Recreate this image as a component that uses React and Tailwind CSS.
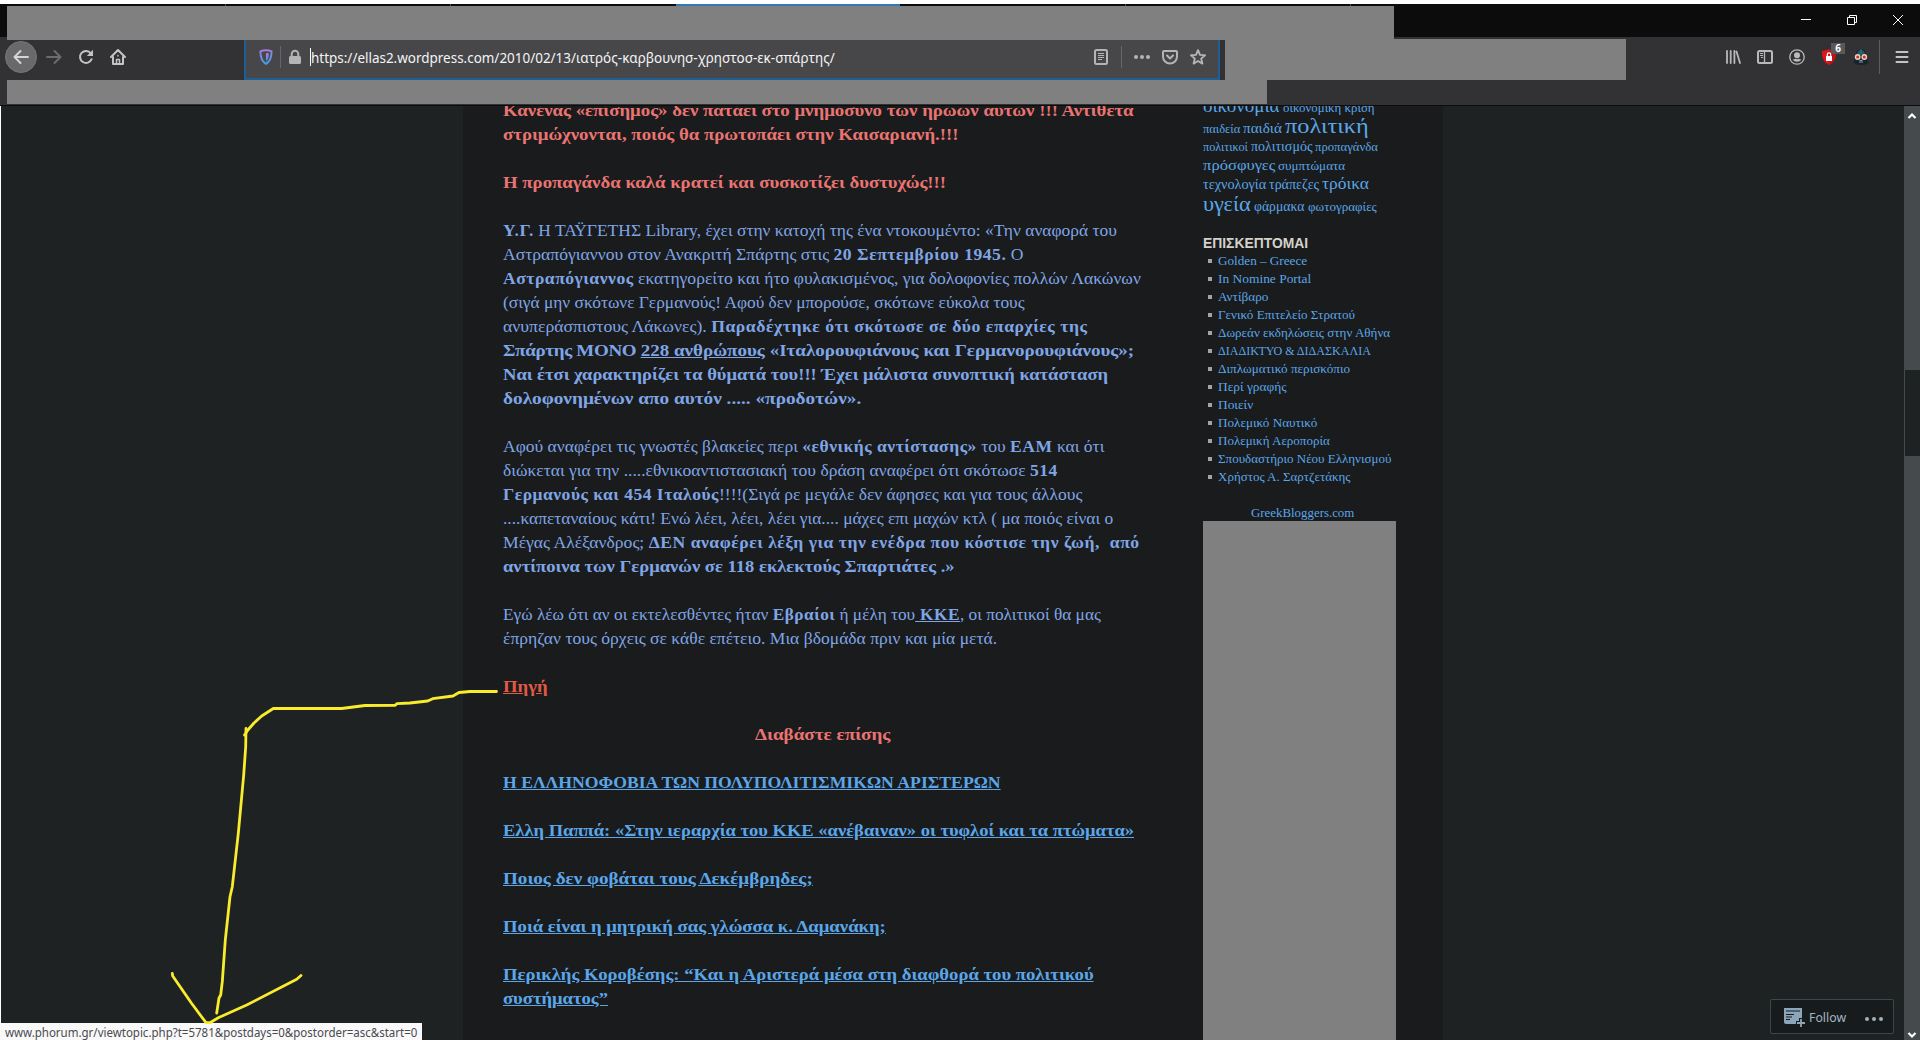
import { useLayoutEffect, useRef, useState } from "react";

// Stretches a single line of text to an exact width
function Fit({ w, className = "", children }) {
  const ref = useRef(null);
  const [scale, setScale] = useState(1);

  useLayoutEffect(() => {
    setScale(w / ref.current.offsetWidth);
  }, [w]);

  return (
    <span className="block shrink-0 whitespace-pre" style={{ width: w }}>
      <span
        ref={ref}
        className={"inline-block origin-left " + className}
        style={{ transform: `scaleX(${scale})` }}
      >
        {children}
      </span>
    </span>
  );
}

const relatedLinks = [
  [{ w: 498, text: "Η ΕΛΛΗΝΟΦΟΒΙΑ ΤΩΝ ΠΟΛΥΠΟΛΙΤΙΣΜΙΚΩΝ ΑΡΙΣΤΕΡΩΝ" }],
  [{ w: 631, text: "Ελλη Παππά: «Στην ιεραρχία του ΚΚΕ «ανέβαιναν» οι τυφλοί και τα πτώματα»" }],
  [{ w: 310, text: "Ποιος δεν φοβάται τους Δεκέμβρηδες;" }],
  [{ w: 383, text: "Ποιά είναι η μητρική σας γλώσσα κ. Δαμανάκη;" }],
  [
    { w: 591, text: "Περικλής Κοροβέσης: “Και η Αριστερά μέσα στη διαφθορά του πολιτικού" },
    { w: 105, text: "συστήματος”" },
  ],
];

const tagRows = [
  {
    row: "h-5",
    tags: [
      { w: 77, size: "text-[18px]", text: "οικονομία" },
      { w: 92, size: "text-[13px]", text: "οικονομική κρίση" },
    ],
  },
  {
    row: "h-5",
    tags: [
      { w: 37, size: "text-[12.5px]", text: "παιδεία" },
      { w: 39, size: "text-[14px]", text: "παιδιά" },
      { w: 84, size: "text-[22px]", text: "πολιτική" },
    ],
  },
  {
    row: "h-[19px]",
    tags: [
      { w: 45, size: "text-[12.5px]", text: "πολιτικοί" },
      { w: 61, size: "text-[14px]", text: "πολιτισμός" },
      { w: 63, size: "text-[12.5px]", text: "προπαγάνδα" },
    ],
  },
  {
    row: "h-[19px]",
    tags: [
      { w: 72, size: "text-[15px]", text: "πρόσφυγες" },
      { w: 67, size: "text-[13.5px]", text: "συμπτώματα" },
    ],
  },
  {
    row: "h-5",
    tags: [
      { w: 63, size: "text-[14px]", text: "τεχνολογία" },
      { w: 50, size: "text-[14px]", text: "τράπεζες" },
      { w: 47, size: "text-[16px]", text: "τρόικα" },
    ],
  },
  {
    row: "h-[21px]",
    tags: [
      { w: 48, size: "text-[21px]", text: "υγεία" },
      { w: 51, size: "text-[14px]", text: "φάρμακα" },
      { w: 69, size: "text-[12.5px]", text: "φωτογραφίες" },
    ],
  },
];

const blogroll = [
  { w: 89, text: "Golden – Greece" },
  { w: 93, text: "In Nomine Portal" },
  { w: 50, text: "Αντίβαρο" },
  { w: 137, text: "Γενικό Επιτελείο Στρατού" },
  { w: 172, text: "Δωρεάν εκδηλώσεις στην Αθήνα" },
  { w: 153, text: "ΔΙΑΔΙΚΤΥΟ & ΔΙΔΑΣΚΑΛΙΑ" },
  { w: 132, text: "Διπλωματικό περισκόπιο" },
  { w: 69, text: "Περί γραφής" },
  { w: 35, text: "Ποιείν" },
  { w: 99, text: "Πολεμικό Ναυτικό" },
  { w: 112, text: "Πολεμική Αεροπορία" },
  { w: 173, text: "Σπουδαστήριο Νέου Ελληνισμού" },
  { w: 132, text: "Χρήστος Α. Σαρτζετάκης" },
];

function TabStrip() {
  return (
    <div>
      <div className="h-1 bg-white" />
      {/* tab tops */}
      <div className="flex h-0.5 bg-[#0c0c0d] pl-[225px]">
        <div className="w-px bg-[#4a4a4c]" />
        <div className="ml-56 w-px bg-[#4a4a4c]" />
        <div className="ml-[225px] w-56 bg-[#3079bd]" />
        <div className="ml-[225px] w-px bg-[#4a4a4c]" />
        <div className="ml-56 w-px bg-[#4a4a4c]" />
      </div>
      <div className="flex h-[31px] bg-[#0c0c0d] pl-[7px]">
        <div className="w-[1387px] bg-[#808080]" />
        <div className="flex flex-1 items-start justify-end gap-[34px] pt-2 pr-4">
          <svg width="12" height="12" viewBox="0 0 12 12" stroke="#fff" fill="none">
            <path d="M1 5.5h10" />
          </svg>
          <svg width="12" height="12" viewBox="0 0 12 12" stroke="#fff" fill="none">
            <path d="M1.5 3.5h7v7h-7zM3.5 3.5v-2h7v7h-2" />
          </svg>
          <svg width="12" height="12" viewBox="0 0 12 12" stroke="#fff" fill="none">
            <path d="M1 1l10 10M11 1L1 11" />
          </svg>
        </div>
      </div>
    </div>
  );
}

function NavButtons() {
  return (
    <div className="flex w-[244px] items-center pb-[7px] pl-[5px]">
      <div className="flex size-8 items-center justify-center rounded-full border border-[#76767a] bg-[#69696c]">
        <svg width="16" height="16" viewBox="0 0 16 16" fill="none" stroke="#d4d4d5" strokeWidth="2" strokeLinecap="round" strokeLinejoin="round">
          <path d="M15 8H1.500M7.500 2l-6 6 6 6" />
        </svg>
      </div>
      <svg className="ml-[9px]" width="16" height="16" viewBox="0 0 16 16" fill="none" stroke="#6c6c6e" strokeWidth="2" strokeLinecap="round" strokeLinejoin="round">
        <path d="M1 8h13.500M8.500 2l6 6-6 6" />
      </svg>
      <svg className="ml-4" width="16" height="16" viewBox="0 0 16 16" fill="none" stroke="#c4c4c5" strokeWidth="2" strokeLinecap="round">
        <path d="M13.600 10.200A6 6 0 1 1 12.800 4.300" />
        <path d="M15 .8v6.200H8.800z" fill="#c4c4c5" stroke="none" />
      </svg>
      <svg className="ml-4" width="16" height="16" viewBox="0 0 16 16" fill="none" stroke="#c4c4c5" strokeWidth="2" strokeLinecap="round" strokeLinejoin="round">
        <path d="M1 8l7-7 7 7M3 8v7h10V8" />
        <path d="M6.500 15v-4.500h3V15" strokeWidth="1.500" />
        <path d="M8 6.500v.5" strokeWidth="1.500" />
      </svg>
    </div>
  );
}

function UrlBar() {
  return (
    <div className="flex w-[976px] items-center border-x-2 border-b-2 border-[#1d5f95] bg-[#474749] pr-3 pb-[5px] pl-[13px]">
      <svg width="14" height="16" viewBox="0 0 14 16" fill="none">
        <defs>
          <linearGradient id="shield" x1="0" y1="0" x2="0" y2="1">
            <stop offset="0" stopColor="#a77ae0" />
            <stop offset="1" stopColor="#3fa0e6" />
          </linearGradient>
        </defs>
        <path d="M7 1.200c2 0 4 .4 5.600 1.100 0 5.500-.8 9.900-5.600 12.500C2.200 12.200 1.400 7.800 1.400 2.300 3 1.600 5 1.200 7 1.200z" stroke="url(#shield)" strokeWidth="1.900" />
        <path d="M7 4c1 0 2 .1 2.800.4 0 3.500-.6 5.800-2.800 7.600z" fill="url(#shield)" />
      </svg>
      <div className="ml-[7px] h-[22px] w-px bg-[#67676a]" />
      <svg className="ml-[7px]" width="14" height="16" viewBox="0 0 14 16" fill="none">
        <rect x="1" y="7" width="12" height="8" rx="1.500" fill="#b4b4b6" />
        <path d="M3.700 8V5a3.300 3.300 0 0 1 6.600 0v3" stroke="#b4b4b6" strokeWidth="2" />
      </svg>
      <div className="ml-2 h-[18px] w-px bg-white" />
      <Fit w={524} className="font-['Noto_Sans',sans-serif] text-[14px] leading-5 text-[#f4f4f5]">
        https://ellas2.wordpress.com/2010/02/13/ιατρός-καρβουνησ-χρηστοσ-εκ-σπάρτης/
      </Fit>
      <div className="flex flex-1 items-center justify-end">
        <svg width="14" height="16" viewBox="0 0 14 16" fill="none" stroke="#b4b4b6">
          <rect x="1" y="1" width="12" height="14" rx="1.500" strokeWidth="2" />
          <path d="M4 4.500h6M4 6.500h6M4 8.500h6M4 10.500h4" />
        </svg>
        <div className="ml-[13px] h-[22px] w-px bg-[#67676a]" />
        <svg className="ml-3" width="16" height="16" viewBox="0 0 16 16" fill="#b4b4b6">
          <circle cx="2" cy="8" r="2" />
          <circle cx="8" cy="8" r="2" />
          <circle cx="14" cy="8" r="2" />
        </svg>
        <svg className="ml-3" width="16" height="16" viewBox="0 0 16 16" fill="none" stroke="#b4b4b6" strokeWidth="2" strokeLinecap="round" strokeLinejoin="round">
          <path d="M2 2h12a1 1 0 0 1 1 1v4.500a7 7 0 0 1-14 0V3a1 1 0 0 1 1-1z" />
          <path d="M5 6.500l3 3 3-3" />
        </svg>
        <svg className="ml-3" width="16" height="16" viewBox="0 0 16 16" fill="none" stroke="#b4b4b6" strokeWidth="1.900" strokeLinejoin="round">
          <path d="M8 1.200l2 4.700 5 .4-3.800 3.300 1.200 5L8 12l-4.400 2.600 1.200-5L1 6.300l5-.4z" />
        </svg>
      </div>
    </div>
  );
}

function ToolbarIcons() {
  return (
    <div className="flex flex-1 items-center justify-end pr-[10px] pb-[7px]">
      <svg width="16" height="16" viewBox="0 0 16 16" fill="none" stroke="#b9b9ba" strokeWidth="2" strokeLinecap="round">
        <path d="M2 2v12M5.700 2v12M9.400 2v12M11.500 2.500L15 14" strokeWidth="1.800" />
      </svg>
      <svg className="ml-4" width="16" height="16" viewBox="0 0 16 16" fill="none" stroke="#b9b9ba">
        <rect x="1" y="2" width="14" height="12" rx="1.500" strokeWidth="2" />
        <path d="M7.500 2v12" strokeWidth="1.300" />
        <path d="M3 4.500h3M3 6.500h3M4 8.500h2" />
      </svg>
      <svg className="ml-4" width="16" height="16" viewBox="0 0 16 16" fill="none">
        <circle cx="8" cy="8" r="7.200" stroke="#b9b9ba" strokeWidth="1.300" />
        <circle cx="8" cy="6.200" r="3" fill="#b9b9ba" />
        <path d="M3.500 10.500c1.200.2 2.200-.3 2.800-.8 1 .6 2.400.6 3.400 0 .6.500 1.600 1 2.800.8a5.500 5.500 0 0 1-9 0z" fill="#b9b9ba" />
      </svg>
      <div className="relative ml-4">
        <svg width="16" height="18" viewBox="0 0 16 18">
          <path d="M8 1c2 1.200 4.500 1.800 7 1.800 0 6.500-1 11.200-7 14.200C2 14 1 9.300 1 2.800 3.500 2.800 6 2.200 8 1z" fill="#e0151b" />
          <path d="M8 1c2 1.200 4.500 1.800 7 1.800 0 6.500-1 11.200-7 14.200z" fill="#c90f14" />
          <rect x="5" y="8" width="6" height="5" fill="#fff" />
          <path d="M6.300 8V6.500a1.700 1.700 0 0 1 3.400 0V8" stroke="#fff" strokeWidth="1.200" fill="none" />
        </svg>
        <span className="absolute -top-[5px] left-[10px] flex h-[11px] w-[14px] items-center justify-center bg-[#58595b] font-['Noto_Sans',sans-serif] text-[10px] leading-none font-bold text-white">
          6
        </span>
      </div>
      <svg className="ml-4" width="16" height="16" viewBox="0 0 16 16">
        <path d="M8 0C4.500 0 3 2.500 3 5.500L.5 14 5 16h6l4.500-2L13 5.500C13 2.500 11.500 0 8 0z" fill="#14252d" />
        <path d="M8 1C5.500 1 4 3 4 5.500h8C12 3 10.500 1 8 1z" fill="#245562" />
        <path d="M7.300 0h1.400v6H7.300z" fill="#2f6b7a" />
        <circle cx="4.700" cy="8" r="2.200" fill="#c4352a" stroke="#f0cfc2" strokeWidth="1.400" />
        <circle cx="11.300" cy="8" r="2.200" fill="#c4352a" stroke="#f0cfc2" strokeWidth="1.400" />
        <path d="M6 13h4M6.500 11.500h3" stroke="#8a9499" />
      </svg>
      <div className="ml-[10px] h-[34px] w-px bg-[#5c5c5e]" />
      <svg className="ml-[14px]" width="16" height="16" viewBox="0 0 16 16" stroke="#c4c4c5" strokeWidth="2" strokeLinecap="round">
        <path d="M2.500 3h11M2.500 8h11M2.500 13h11" />
      </svg>
    </div>
  );
}

function Toolbar() {
  return (
    <div className="h-[69px] border-b border-[#0c0c0d] bg-[#323234]">
      <div className="h-0.5 pl-[7px]">
        <div className="h-full w-[1387px] bg-[#808080]" />
      </div>
      <div className="h-px pl-[7px]">
        <div className="h-full w-[1619px] bg-[#808080]" />
      </div>
      <div className="flex h-10">
        <NavButtons />
        <UrlBar />
        <div className="ml-[5px] w-[401px] bg-[#808080]" />
        <ToolbarIcons />
      </div>
      {/* bookmarks */}
      <div className="h-6 pl-[7px]">
        <div className="h-full w-[1260px] bg-[#808080]" />
      </div>
    </div>
  );
}

function Article() {
  return (
    <article className="-mt-[7px] w-[640px] space-y-6 font-['Liberation_Serif',serif] text-[17px] leading-6 text-[#80a5e5] [&_b]:tracking-[0.5px]">
      <div className="font-bold text-[#ea7472]">
        <Fit w={631}>Κανένας «επίσημος» δεν πατάει στο μνημόσυνο των ηρώων αυτών !!! Αντίθετα</Fit>
        <Fit w={456}>στριμώχνονται, ποιός θα πρωτοπάει στην Καισαριανή.!!!</Fit>
      </div>
      <div className="font-bold text-[#ea7472]">
        <Fit w={443}>Η προπαγάνδα καλά κρατεί και συσκοτίζει δυστυχώς!!!</Fit>
      </div>
      <div>
        <Fit w={614}>
          <b>Υ.Γ.</b> Η ΤΑΫΓΕΤΗΣ Library, έχει στην κατοχή της ένα ντοκουμέντο: «Την αναφορά του
        </Fit>
        <Fit w={520}>
          Αστραπόγιαννου στον Ανακριτή Σπάρτης στις <b>20 Σεπτεμβρίου 1945.</b> Ο
        </Fit>
        <Fit w={638}>
          <b>Αστραπόγιαννος</b> εκατηγορείτο και ήτο φυλακισμένος, για δολοφονίες πολλών Λακώνων
        </Fit>
        <Fit w={522}>(σιγά μην σκότωνε Γερμανούς! Αφού δεν μπορούσε, σκότωνε εύκολα τους</Fit>
        <Fit w={585}>
          ανυπεράσπιστους Λάκωνες). <b>Παραδέχτηκε ότι σκότωσε σε δύο επαρχίες της</b>
        </Fit>
        <Fit w={631} className="font-bold">
          <span className="-tracking-[0.3px]">Σπάρτης ΜΟΝΟ </span>
          <span className="underline">228 ανθρώπους</span> «Ιταλορουφιάνους και Γερμανορουφιάνους»;
        </Fit>
        <Fit w={605} className="font-bold">
          Ναι έτσι χαρακτηρίζει τα θύματά του!!! Έχει μάλιστα συνοπτική κατάσταση
        </Fit>
        <Fit w={358} className="font-bold">δολοφονημένων απο αυτόν ..... «προδοτών».</Fit>
      </div>
      <div>
        <Fit w={601}>
          Αφού αναφέρει τις γνωστές βλακείες περι <b>«εθνικής αντίστασης»</b> του <b>ΕΑΜ</b> και ότι
        </Fit>
        <Fit w={555}>
          διώκεται για την .....εθνικοαντιστασιακή του δράση αναφέρει ότι σκότωσε <b>514</b>
        </Fit>
        <Fit w={579}>
          <b>Γερμανούς και 454 Ιταλούς</b>!!!!(Σιγά ρε μεγάλε δεν άφησες και για τους άλλους
        </Fit>
        <Fit w={610}>....καπεταναίους κάτι! Ενώ λέει, λέει, λέει για.... μάχες επι μαχών κτλ ( μα ποιός είναι ο</Fit>
        <Fit w={637}>
          Μέγας Αλέξανδρος; <b>ΔΕΝ αναφέρει λέξη για την ενέδρα που κόστισε την ζωή,&nbsp; από</b>
        </Fit>
        <Fit w={452} className="font-bold">αντίποινα των Γερμανών σε 118 εκλεκτούς Σπαρτιάτες .»</Fit>
      </div>
      <div>
        <Fit w={598}>
          Εγώ λέω ότι αν οι εκτελεσθέντες ήταν <b>Εβραίοι</b> ή μέλη του<b className="underline"> ΚΚΕ</b>, οι πολιτικοί θα μας
        </Fit>
        <Fit w={494}>έπρηζαν τους όρχεις σε κάθε επέτειο. Μια βδομάδα πριν και μία μετά.</Fit>
      </div>
      <a className="block font-bold text-[#e25a45]">
        <Fit w={44} className="underline">Πηγή</Fit>
      </a>
      <div className="flex justify-center pr-0.5 font-bold text-[#ea7472]">
        <Fit w={135}>Διαβάστε επίσης</Fit>
      </div>
      {relatedLinks.map((lines, i) => (
        <a key={i} className="block font-bold text-[#5ba6e8]">
          {lines.map((line) => (
            <Fit key={line.text} w={line.w} className="underline">
              {line.text}
            </Fit>
          ))}
        </a>
      ))}
    </article>
  );
}

function Sidebar() {
  return (
    <aside className="ml-[60px] flex w-[193px] flex-col font-['Liberation_Serif',serif] text-[#5ba6e8]">
      <div className="-mt-[10px]">
        {tagRows.map((r, i) => (
          <div key={i} className={"flex items-baseline gap-[3px] leading-5 " + r.row}>
            {r.tags.map((t) => (
              <Fit key={t.text} w={t.w} className={t.size}>
                {t.text}
              </Fit>
            ))}
          </div>
        ))}
      </div>
      <h3 className="mt-[19px] font-['Liberation_Sans',sans-serif] text-[14px] leading-[18px] font-bold text-[#d5d1cb]">
        <Fit w={105}>ΕΠΙΣΚΕΠΤΟΜΑΙ</Fit>
      </h3>
      <ul className="text-[13px] leading-[18px]">
        {blogroll.map((link) => (
          <li key={link.text} className="flex h-[18px] items-center pl-[5px]">
            <span className="mr-[6px] size-1 bg-[#a8a49d]" />
            <Fit w={link.w}>{link.text}</Fit>
          </li>
        ))}
      </ul>
      <div className="mt-[18px] flex h-[17px] justify-center pl-1.5 text-[13px] leading-[18px]">
        <Fit w={103}>GreekBloggers.com</Fit>
      </div>
      <div className="flex-1 bg-[#808080]" />
    </aside>
  );
}

function ScrollBar() {
  return (
    <div className="flex w-4 flex-col items-center bg-[#454a4d]">
      <svg className="mt-1.5" width="10" height="8" viewBox="0 0 10 8" fill="none" stroke="#fff" strokeWidth="2.200">
        <path d="M1.500 6L5 2.500 8.500 6" />
      </svg>
      <div className="mt-[250px] ml-px h-[86px] w-[15px] bg-[#1f2223]" />
      <svg className="mt-auto mb-px" width="10" height="8" viewBox="0 0 10 8" fill="none" stroke="#fff" strokeWidth="2.200">
        <path d="M1.500 2L5 5.500 8.500 2" />
      </svg>
    </div>
  );
}

function FollowBar() {
  return (
    <div className="absolute top-[999px] left-[1770px] flex h-[35px] w-[124px] items-center rounded-[2px] border border-[#374850] bg-[#181b1c] pl-[13px] font-['Noto_Sans',sans-serif] text-[13px] leading-5 text-[#a0b5c4]">
      <svg className="mt-0.5" width="22" height="20" viewBox="0 0 22 20">
        <path d="M0 0h18v10h-3v3h-3v3H2a2 2 0 0 1-2-2z" fill="#8ba6bb" />
        <path d="M2 3h14M2 6.500h8M2 9h6M2 11.500h4" stroke="#181b1c" strokeWidth="1.200" />
        <path d="M17 11v8M13 15h8" stroke="#8ba6bb" strokeWidth="1.800" />
      </svg>
      <Fit w={37} className="ml-[3px]">Follow</Fit>
      <svg className="mt-[5px] mr-[9px] ml-auto" width="20" height="6" viewBox="0 0 20 6" fill="#9db1c0">
        <circle cx="3" cy="3" r="2" />
        <circle cx="10" cy="3" r="2" />
        <circle cx="17" cy="3" r="2" />
      </svg>
    </div>
  );
}

// Hand-drawn arrow from the source link to the status bar
function Arrow() {
  return (
    <svg
      className="absolute top-0 left-0"
      width="520"
      height="1040"
      viewBox="0 0 520 1040"
      fill="none"
      stroke="#f8ec2c"
      strokeWidth="2.800"
      strokeLinecap="round"
      strokeLinejoin="round"
    >
      <path d="M496.500 691.500H470L459 692.500 453 696 432.700 698.700 427.700 701 410 703 397 703.700 395 705.300 365 705.500 341.700 708.500H273.300L261.700 716 254 723 248.300 729.500 244.500 735" />
      <path d="M246 728.500L245.700 746.700 243.700 775 238.300 833.300 232.300 886.700 230 896.700 225.300 940 222.300 981.700 220.700 995 219 998 216.700 1013" />
      <path d="M172.300 973.500L172.700 976 191.700 1003.500 206 1022.700H210L218.300 1017.700 246.700 1005 296.700 979.300 301 975.500" />
    </svg>
  );
}

export default function App() {
  return (
    <div className="relative flex h-[1040px] w-[1920px] flex-col overflow-hidden bg-[#1f2223]">
      <TabStrip />
      <Toolbar />
      <main className="flex min-h-0 flex-1 overflow-hidden border-l border-white">
        <div className="ml-[462px] flex w-[980px] bg-[#191b1c] pl-10">
          <Article />
          <Sidebar />
        </div>
        <div className="flex-1" />
        <ScrollBar />
      </main>
      <FollowBar />
      <div className="absolute bottom-0 left-0 flex h-[17px] w-[422px] overflow-hidden bg-[#f9f9fa] pl-[5px] font-['Noto_Sans',sans-serif] text-[12.5px] leading-5 text-[#4a4a4f]">
        <Fit w={412}>www.phorum.gr/viewtopic.php?t=5781&postdays=0&postorder=asc&start=0</Fit>
      </div>
      <Arrow />
    </div>
  );
}
